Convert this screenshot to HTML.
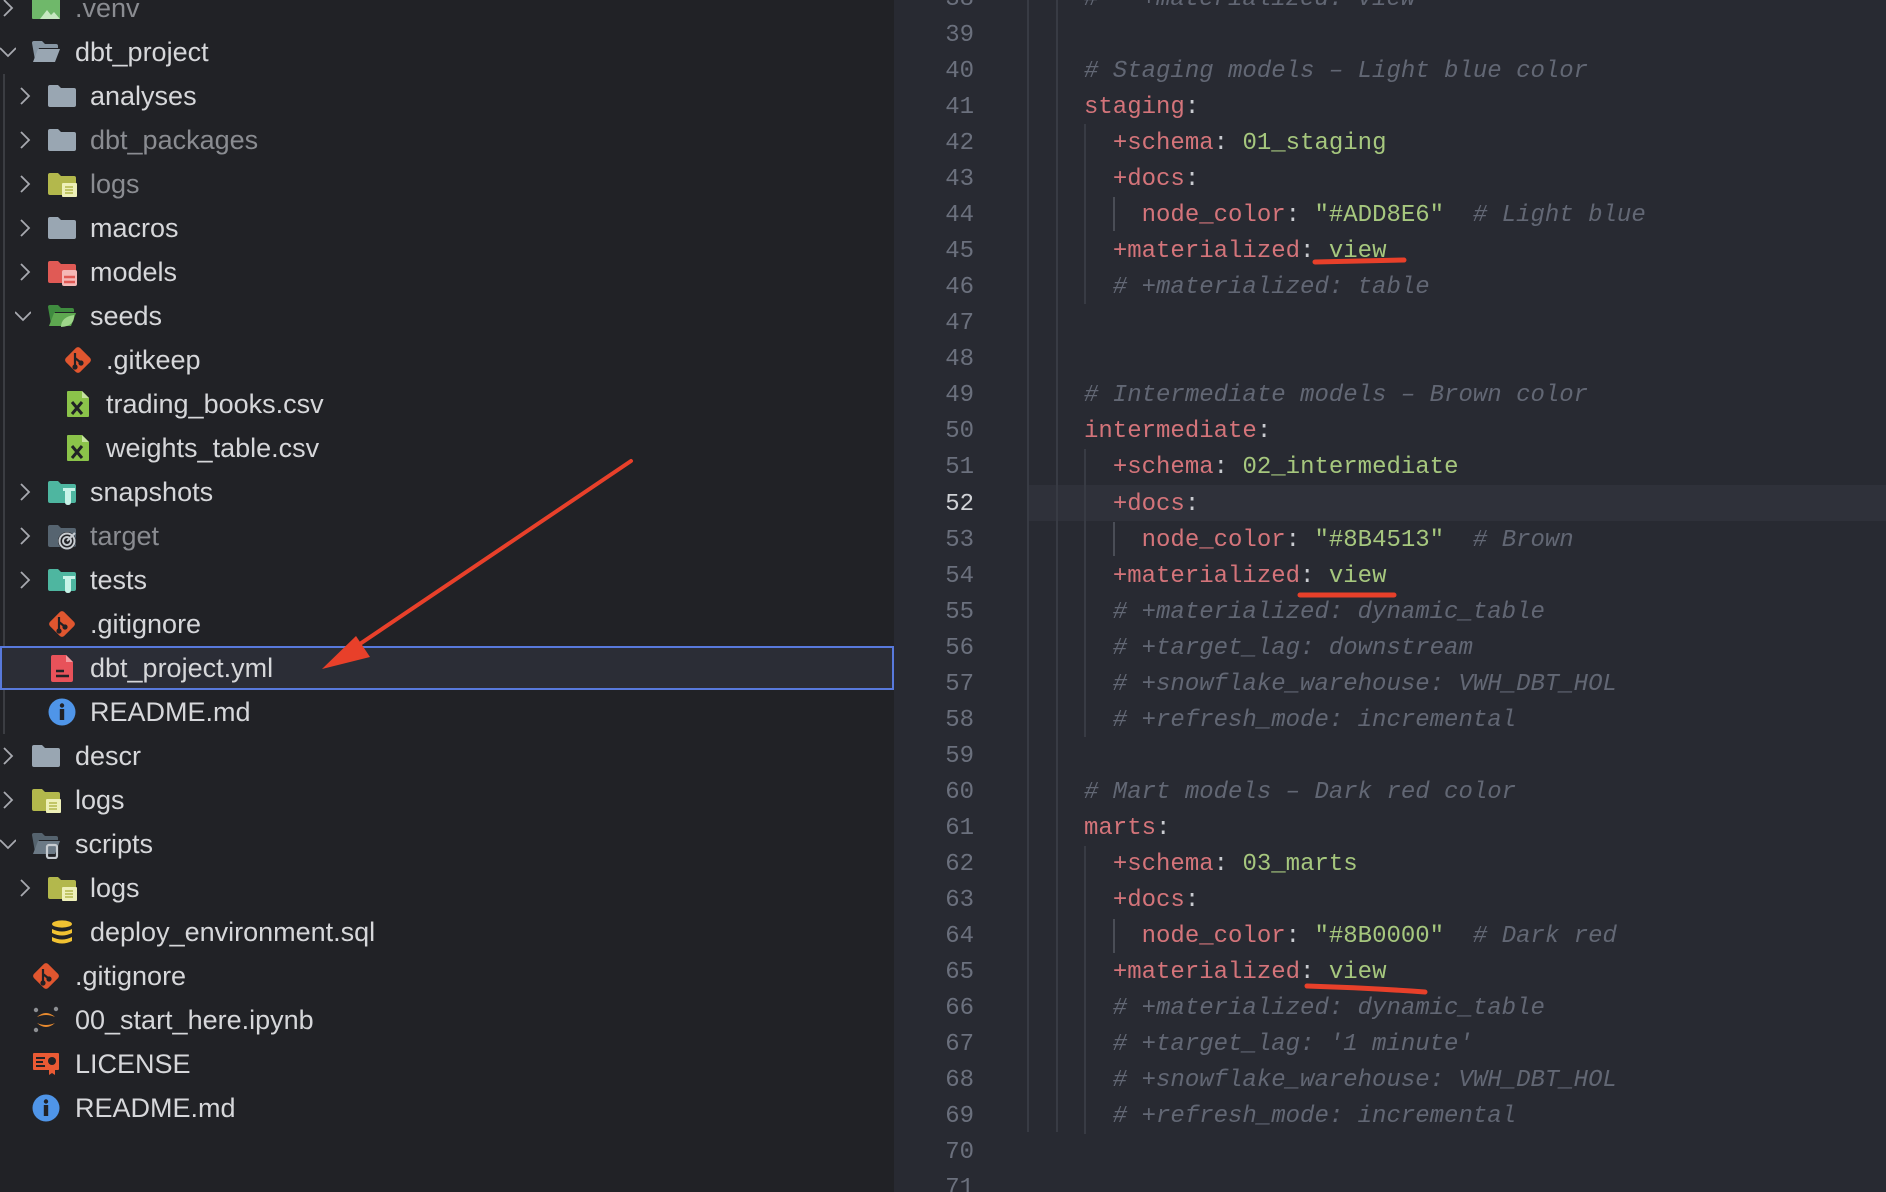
<!DOCTYPE html>
<html style="background:#282a32"><head><meta charset="utf-8"><style>
*{margin:0;padding:0;box-sizing:border-box}
html,body{width:1886px;height:1192px;overflow:hidden}
body{background:#282a32;position:relative;font-family:"Liberation Sans",sans-serif}
#side{position:absolute;left:0;top:0;width:894px;height:1192px;background:#212226}
.r{position:absolute;left:0;width:894px;height:44px;line-height:44px;font-size:27px;color:#d6d7da;white-space:nowrap}
.r.dim{color:#8a8c91}
.r svg{position:absolute;top:7px}
.r .t{position:absolute}
.r .ch{position:absolute;top:12px;width:16px;height:20px}
.sel{background:#2b2d36;border:2px solid #5879dc}
#ed{position:absolute;left:894px;top:0;width:992px;height:1192px;background:#282a32}
.ln{position:absolute;left:894px;width:80px;text-align:right;font-family:"Liberation Mono",monospace;font-size:24px;color:#6b707d;height:36px;line-height:36px;margin-top:4px}
.cl{position:absolute;left:1084px;font-family:"Liberation Mono",monospace;font-size:24px;height:36px;line-height:36px;white-space:pre;color:#c9cbd0;margin-top:4px}
.k{color:#d4747a}.s{color:#a6c77e}.c{color:#626774;font-style:italic}.p{color:#c9cbd0}
.g{position:absolute;width:2px;background:#383b44}
</style></head><body>
<div id="side">
<div style="position:absolute;left:3px;top:74px;width:2px;height:660px;background:#3b3d42"></div>
</div>
<svg width="0" height="0" style="position:absolute">
<defs>
<symbol id="chr" viewBox="0 0 16 20"><path d="M4 2 L12 10 L4 18" fill="none" stroke="#a8aab0" stroke-width="1.8"/></symbol>
<symbol id="chd" viewBox="0 0 16 20"><path d="M0 6 L8 14 L16 6" fill="none" stroke="#a8aab0" stroke-width="1.8"/></symbol>
<symbol id="fold" viewBox="0 0 30 30"><path d="M1 6q0-2 2-2h8l3 3h13q2 0 2 2v15q0 2-2 2H3q-2 0-2-2z" fill="#99a6b2"/></symbol>
<symbol id="foldo" viewBox="0 0 30 30"><path d="M1 6q0-2 2-2h8l3 3h11q2 0 2 2v2H8l-4 12z" fill="#8796a3"/><path d="M7 12h22l-5 13H2z" fill="#99a6b2"/></symbol>
<symbol id="logs" viewBox="0 0 30 30"><path d="M1 6q0-2 2-2h8l3 3h13q2 0 2 2v15q0 2-2 2H3q-2 0-2-2z" fill="#b3b84c"/><rect x="15" y="14" width="15" height="14" rx="1" fill="#eef0b8"/><path d="M18 18h8M18 21h8M18 24h8" stroke="#b3b84c" stroke-width="1.6"/></symbol>
<symbol id="models" viewBox="0 0 30 30"><path d="M1 6q0-2 2-2h8l3 3h13q2 0 2 2v15q0 2-2 2H3q-2 0-2-2z" fill="#e05a55"/><rect x="15" y="13" width="15" height="16" rx="2" fill="#f5b8b6"/><path d="M17 20h11M17 25h11" stroke="#e05a55" stroke-width="2.4"/></symbol>
<symbol id="seeds" viewBox="0 0 30 30"><path d="M1 6q0-2 2-2h8l3 3h11q2 0 2 2v2H8l-4 12z" fill="#3f8c3f"/><path d="M7 12h22l-5 13H2z" fill="#5ea850"/><path d="M14 26q0-10 13-12q1 11-13 12z" fill="#9ed68a"/></symbol>
<symbol id="snap" viewBox="0 0 30 30"><path d="M1 6q0-2 2-2h8l3 3h13q2 0 2 2v15q0 2-2 2H3q-2 0-2-2z" fill="#4eb6a0"/><rect x="16" y="11" width="12" height="3" fill="#c8f3e8"/><path d="M18 13v12q0 3 3 3t3-3V13z" fill="#c8f3e8"/></symbol>
<symbol id="target" viewBox="0 0 30 30"><path d="M1 6q0-2 2-2h8l3 3h13q2 0 2 2v15q0 2-2 2H3q-2 0-2-2z" fill="#566470"/><circle cx="20" cy="20" r="9" fill="#212226"/><circle cx="20" cy="20" r="7.5" fill="none" stroke="#c7ccd1" stroke-width="2"/><circle cx="20" cy="20" r="4" fill="none" stroke="#c7ccd1" stroke-width="2"/><path d="M20 20l8-8" stroke="#c7ccd1" stroke-width="2"/></symbol>
<symbol id="scripts" viewBox="0 0 30 30"><path d="M1 6q0-2 2-2h8l3 3h11q2 0 2 2v2H8l-4 12z" fill="#55636e"/><path d="M7 12h22l-5 13H2z" fill="#6c7a86"/><rect x="16" y="16" width="10" height="13" rx="2" fill="none" stroke="#c7ccd1" stroke-width="2.2"/></symbol>
<symbol id="git" viewBox="0 0 30 30"><rect x="5" y="5" width="20" height="20" rx="3" transform="rotate(45 15 15)" fill="#e0562f"/><path d="M12 8v14M12 13l5 4" stroke="#212226" stroke-width="2.2" fill="none"/><circle cx="12" cy="22" r="2.6" fill="#212226"/><circle cx="18" cy="18" r="2.6" fill="#212226"/></symbol>
<symbol id="csv" viewBox="0 0 30 30"><path d="M5 2h14l7 7v18q0 1-1 1H5q-1 0-1-1V3q0-1 1-1z" fill="#8bc34a"/><path d="M19 2v7h7" fill="#c5e39e"/><path d="M9 13l10 12M19 13L9 25" stroke="#212226" stroke-width="3"/></symbol>
<symbol id="yml" viewBox="0 0 30 30"><path d="M6 2h13l7 7v18q0 2-2 2H6q-2 0-2-2V4q0-2 2-2z" fill="#e8525a"/><path d="M19 2v7h7" fill="#f49aa0"/><path d="M9 18h8M9 23h13" stroke="#212226" stroke-width="2.4"/></symbol>
<symbol id="info" viewBox="0 0 30 30"><circle cx="15" cy="15" r="13.5" fill="#4f95e8"/><circle cx="15" cy="8.5" r="2.2" fill="#212226"/><rect x="12.8" y="12" width="4.4" height="11" fill="#212226"/></symbol>
<symbol id="venv" viewBox="0 0 30 30"><rect x="1" y="2" width="28" height="24" rx="1" fill="#6fb86a"/><path d="M9 26l7-9 4 5 3-3 6 7z" fill="#c7e8c2"/></symbol>
<symbol id="sql" viewBox="0 0 30 30"><ellipse cx="15" cy="7" rx="10" ry="3.6" fill="#f1c232"/><path d="M5 12q10 5 20 0v4q-10 5-20 0z" fill="#f1c232"/><path d="M5 20q10 5 20 0v4q-10 5-20 0z" fill="#f1c232"/></symbol>
<symbol id="jup" viewBox="0 0 30 30"><path d="M6 12q9-8 18 0q-9-4-18 0z" fill="#e98b2f"/><path d="M6 18q9 8 18 0q-9 4-18 0z" fill="#e98b2f"/><circle cx="5" cy="5" r="2.2" fill="#8d8f93"/><circle cx="25" cy="4" r="2.2" fill="#8d8f93"/><circle cx="5" cy="25" r="2.2" fill="#8d8f93"/></symbol>
<symbol id="lic" viewBox="0 0 30 30"><rect x="2" y="4" width="26" height="17" rx="1" fill="#ea5a34"/><path d="M5 9h9M5 13h7M5 17h9" stroke="#212226" stroke-width="2"/><circle cx="21" cy="12" r="4" fill="#212226"/><path d="M18 18v8l3-2 3 2v-8z" fill="#ea5a34"/></symbol>
</defs></svg>

<div class="r dim" style="top:-14px"><svg class="ch" style="left:0"><use href="#chr"/></svg><svg style="left:31px;width:30px;height:30px"><use href="#venv"/></svg><span class="t" style="left:75px">.venv</span></div>
<div class="r" style="top:30px"><svg class="ch" style="left:0"><use href="#chd"/></svg><svg style="left:31px;width:30px;height:30px"><use href="#foldo"/></svg><span class="t" style="left:75px">dbt_project</span></div>
<div class="r" style="top:74px"><svg class="ch" style="left:17px"><use href="#chr"/></svg><svg style="left:47px;width:30px;height:30px"><use href="#fold"/></svg><span class="t" style="left:90px">analyses</span></div>
<div class="r dim" style="top:118px"><svg class="ch" style="left:17px"><use href="#chr"/></svg><svg style="left:47px;width:30px;height:30px"><use href="#fold"/></svg><span class="t" style="left:90px">dbt_packages</span></div>
<div class="r dim" style="top:162px"><svg class="ch" style="left:17px"><use href="#chr"/></svg><svg style="left:47px;width:30px;height:30px"><use href="#logs"/></svg><span class="t" style="left:90px">logs</span></div>
<div class="r" style="top:206px"><svg class="ch" style="left:17px"><use href="#chr"/></svg><svg style="left:47px;width:30px;height:30px"><use href="#fold"/></svg><span class="t" style="left:90px">macros</span></div>
<div class="r" style="top:250px"><svg class="ch" style="left:17px"><use href="#chr"/></svg><svg style="left:47px;width:30px;height:30px"><use href="#models"/></svg><span class="t" style="left:90px">models</span></div>
<div class="r" style="top:294px"><svg class="ch" style="left:15px"><use href="#chd"/></svg><svg style="left:47px;width:30px;height:30px"><use href="#seeds"/></svg><span class="t" style="left:90px">seeds</span></div>
<div class="r" style="top:338px"><svg style="left:63px;width:30px;height:30px"><use href="#git"/></svg><span class="t" style="left:106px">.gitkeep</span></div>
<div class="r" style="top:382px"><svg style="left:63px;width:30px;height:30px"><use href="#csv"/></svg><span class="t" style="left:106px">trading_books.csv</span></div>
<div class="r" style="top:426px"><svg style="left:63px;width:30px;height:30px"><use href="#csv"/></svg><span class="t" style="left:106px">weights_table.csv</span></div>
<div class="r" style="top:470px"><svg class="ch" style="left:17px"><use href="#chr"/></svg><svg style="left:47px;width:30px;height:30px"><use href="#snap"/></svg><span class="t" style="left:90px">snapshots</span></div>
<div class="r dim" style="top:514px"><svg class="ch" style="left:17px"><use href="#chr"/></svg><svg style="left:47px;width:30px;height:30px"><use href="#target"/></svg><span class="t" style="left:90px">target</span></div>
<div class="r" style="top:558px"><svg class="ch" style="left:17px"><use href="#chr"/></svg><svg style="left:47px;width:30px;height:30px"><use href="#snap"/></svg><span class="t" style="left:90px">tests</span></div>
<div class="r" style="top:602px"><svg style="left:47px;width:30px;height:30px"><use href="#git"/></svg><span class="t" style="left:90px">.gitignore</span></div>
<div class="r sel" style="top:646px;line-height:40px"><svg style="left:45px;top:5px;width:30px;height:30px"><use href="#yml"/></svg><span class="t" style="left:88px">dbt_project.yml</span></div>
<div class="r" style="top:690px"><svg style="left:47px;width:30px;height:30px"><use href="#info"/></svg><span class="t" style="left:90px">README.md</span></div>
<div class="r" style="top:734px"><svg class="ch" style="left:0"><use href="#chr"/></svg><svg style="left:31px;width:30px;height:30px"><use href="#fold"/></svg><span class="t" style="left:75px">descr</span></div>
<div class="r" style="top:778px"><svg class="ch" style="left:0"><use href="#chr"/></svg><svg style="left:31px;width:30px;height:30px"><use href="#logs"/></svg><span class="t" style="left:75px">logs</span></div>
<div class="r" style="top:822px"><svg class="ch" style="left:0"><use href="#chd"/></svg><svg style="left:31px;width:30px;height:30px"><use href="#scripts"/></svg><span class="t" style="left:75px">scripts</span></div>
<div class="r" style="top:866px"><svg class="ch" style="left:17px"><use href="#chr"/></svg><svg style="left:47px;width:30px;height:30px"><use href="#logs"/></svg><span class="t" style="left:90px">logs</span></div>
<div class="r" style="top:910px"><svg style="left:47px;width:30px;height:30px"><use href="#sql"/></svg><span class="t" style="left:90px">deploy_environment.sql</span></div>
<div class="r" style="top:954px"><svg style="left:31px;width:30px;height:30px"><use href="#git"/></svg><span class="t" style="left:75px">.gitignore</span></div>
<div class="r" style="top:998px"><svg style="left:31px;width:30px;height:30px"><use href="#jup"/></svg><span class="t" style="left:75px">00_start_here.ipynb</span></div>
<div class="r" style="top:1042px"><svg style="left:31px;width:30px;height:30px"><use href="#lic"/></svg><span class="t" style="left:75px">LICENSE</span></div>
<div class="r" style="top:1086px"><svg style="left:31px;width:30px;height:30px"><use href="#info"/></svg><span class="t" style="left:75px">README.md</span></div>

<div id="ed"></div>
<div style="position:absolute;left:1027px;top:485px;width:859px;height:36px;background:#2f313a"></div>
<div class="g" style="left:1027px;top:0;height:1132px"></div>
<div class="g" style="left:1056px;top:0;height:1132px"></div>
<div class="g" style="left:1084px;top:124px;height:180px"></div>
<div class="g" style="left:1084px;top:449px;height:288px"></div>
<div class="g" style="left:1084px;top:846px;height:288px"></div>
<div class="g" style="left:1113px;top:197px;height:34px;background:#4a4d56"></div>
<div class="g" style="left:1113px;top:522px;height:34px;background:#4a4d56"></div>
<div class="g" style="left:1113px;top:919px;height:34px;background:#4a4d56"></div>

<div class="ln" style="top:-22px">38</div><div class="ln" style="top:14px">39</div><div class="ln" style="top:50px">40</div><div class="ln" style="top:86px">41</div><div class="ln" style="top:122px">42</div><div class="ln" style="top:158px">43</div><div class="ln" style="top:194px">44</div><div class="ln" style="top:230px">45</div><div class="ln" style="top:266px">46</div><div class="ln" style="top:302px">47</div><div class="ln" style="top:338px">48</div><div class="ln" style="top:374px">49</div><div class="ln" style="top:410px">50</div><div class="ln" style="top:446px">51</div><div class="ln" style="top:483px;color:#d0d2d6">52</div><div class="ln" style="top:519px">53</div><div class="ln" style="top:555px">54</div><div class="ln" style="top:591px">55</div><div class="ln" style="top:627px">56</div><div class="ln" style="top:663px">57</div><div class="ln" style="top:699px">58</div><div class="ln" style="top:735px">59</div><div class="ln" style="top:771px">60</div><div class="ln" style="top:807px">61</div><div class="ln" style="top:843px">62</div><div class="ln" style="top:879px">63</div><div class="ln" style="top:915px">64</div><div class="ln" style="top:951px">65</div><div class="ln" style="top:987px">66</div><div class="ln" style="top:1023px">67</div><div class="ln" style="top:1059px">68</div><div class="ln" style="top:1095px">69</div><div class="ln" style="top:1131px">70</div><div class="ln" style="top:1167px">71</div>

<div class="cl c" style="top:-22px">#   +materialized: view</div>
<div class="cl c" style="top:50px"># Staging models – Light blue color</div>
<div class="cl" style="top:86px"><span class="k">staging</span>:</div>
<div class="cl" style="top:122px">  <span class="k">+schema</span>: <span class="s">01_staging</span></div>
<div class="cl" style="top:158px">  <span class="k">+docs</span>:</div>
<div class="cl" style="top:194px">    <span class="k">node_color</span>: <span class="s">"#ADD8E6"</span>  <span class="c"># Light blue</span></div>
<div class="cl" style="top:230px">  <span class="k">+materialized</span>: <span class="s">view</span></div>
<div class="cl c" style="top:266px">  # +materialized: table</div>
<div class="cl c" style="top:374px"># Intermediate models – Brown color</div>
<div class="cl" style="top:410px"><span class="k">intermediate</span>:</div>
<div class="cl" style="top:446px">  <span class="k">+schema</span>: <span class="s">02_intermediate</span></div>
<div class="cl" style="top:483px">  <span class="k">+docs</span>:</div>
<div class="cl" style="top:519px">    <span class="k">node_color</span>: <span class="s">"#8B4513"</span>  <span class="c"># Brown</span></div>
<div class="cl" style="top:555px">  <span class="k">+materialized</span>: <span class="s">view</span></div>
<div class="cl c" style="top:591px">  # +materialized: dynamic_table</div>
<div class="cl c" style="top:627px">  # +target_lag: downstream</div>
<div class="cl c" style="top:663px">  # +snowflake_warehouse: VWH_DBT_HOL</div>
<div class="cl c" style="top:699px">  # +refresh_mode: incremental</div>
<div class="cl c" style="top:771px"># Mart models – Dark red color</div>
<div class="cl" style="top:807px"><span class="k">marts</span>:</div>
<div class="cl" style="top:843px">  <span class="k">+schema</span>: <span class="s">03_marts</span></div>
<div class="cl" style="top:879px">  <span class="k">+docs</span>:</div>
<div class="cl" style="top:915px">    <span class="k">node_color</span>: <span class="s">"#8B0000"</span>  <span class="c"># Dark red</span></div>
<div class="cl" style="top:951px">  <span class="k">+materialized</span>: <span class="s">view</span></div>
<div class="cl c" style="top:987px">  # +materialized: dynamic_table</div>
<div class="cl c" style="top:1023px">  # +target_lag: '1 minute'</div>
<div class="cl c" style="top:1059px">  # +snowflake_warehouse: VWH_DBT_HOL</div>
<div class="cl c" style="top:1095px">  # +refresh_mode: incremental</div>

<svg style="position:absolute;left:0;top:0" width="1886" height="1192">
<g stroke="#e8402a" stroke-width="5" stroke-linecap="round" fill="none">
<path d="M1315 262 L1404 260"/>
<path d="M1300 595 L1394 595"/>
<path d="M1307 986 Q1370 988 1425 992"/>
<path d="M631 461 L345 654" stroke-width="4"/>
</g>
<path d="M322 669 L356 636 L370 657 Z" fill="#e8402a"/>
</svg>
</body></html>
